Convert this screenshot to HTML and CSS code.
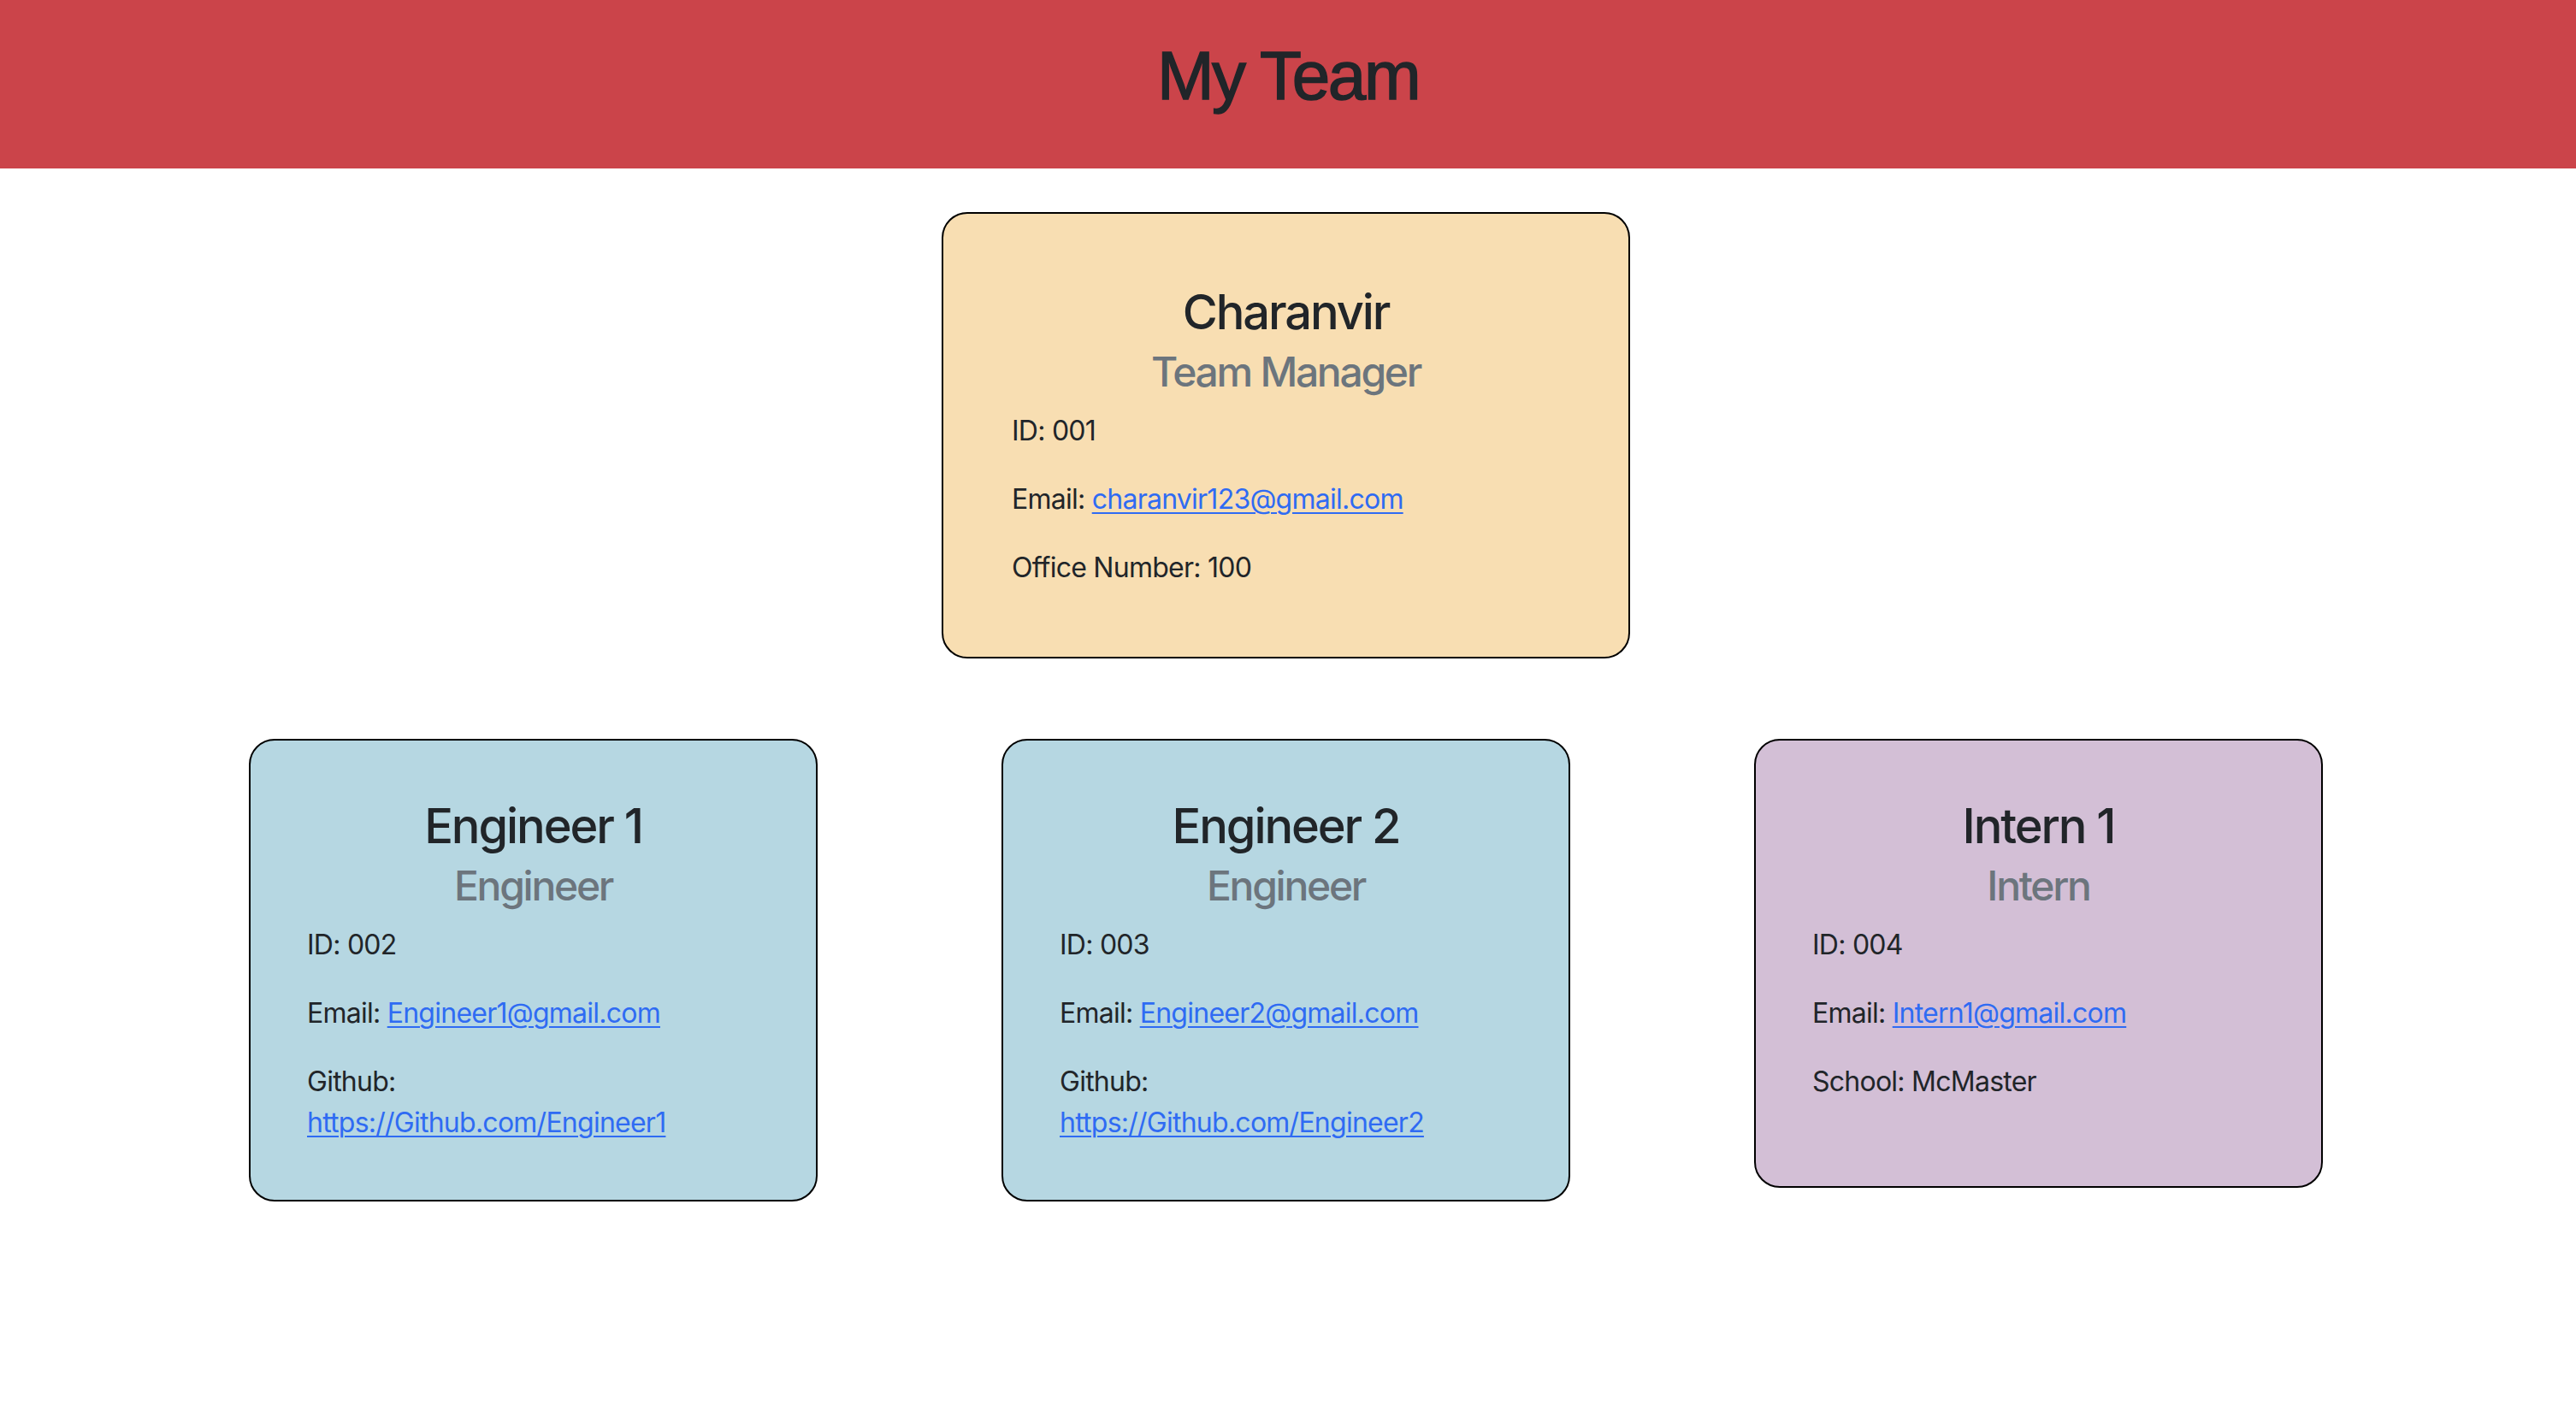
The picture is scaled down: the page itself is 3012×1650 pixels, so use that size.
FILE: index.html
```html
<!DOCTYPE html>
<html lang="en">
<head>
<meta charset="utf-8">
<title>My Team</title>
<link rel="stylesheet" href="styles.css">
</head>
<body>
<header class="banner">
  <h1 class="banner-title">My Team</h1>
</header>
<main class="team">
  <div class="row row-top">
    <section class="card card-manager">
      <h3 class="card-name">Charanvir</h3>
      <h4 class="card-role">Team Manager</h4>
      <p class="card-line">ID: 001</p>
      <p class="card-line">Email: <a href="#">charanvir123@gmail.com</a></p>
      <p class="card-line">Office Number: 100</p>
    </section>
  </div>
  <div class="row row-bottom">
    <section class="card card-engineer">
      <h3 class="card-name">Engineer 1</h3>
      <h4 class="card-role">Engineer</h4>
      <p class="card-line">ID: 002</p>
      <p class="card-line">Email: <a href="#">Engineer1@gmail.com</a></p>
      <p class="card-line">Github:<br><a href="#">https://Github.com/Engineer1</a></p>
    </section>
    <section class="card card-engineer">
      <h3 class="card-name">Engineer 2</h3>
      <h4 class="card-role">Engineer</h4>
      <p class="card-line">ID: 003</p>
      <p class="card-line">Email: <a href="#">Engineer2@gmail.com</a></p>
      <p class="card-line">Github:<br><a href="#">https://Github.com/Engineer2</a></p>
    </section>
    <section class="card card-intern">
      <h3 class="card-name">Intern 1</h3>
      <h4 class="card-role">Intern</h4>
      <p class="card-line">ID: 004</p>
      <p class="card-line">Email: <a href="#">Intern1@gmail.com</a></p>
      <p class="card-line card-line-spaced">School: McMaster</p>
    </section>
  </div>
</main>
</body>
</html>
```

FILE: styles.css
```css
* { box-sizing: border-box; }

html, body {
  margin: 0;
  padding: 0;
  background: #ffffff;
  color: #212529;
  font-family: Inter, "Noto Sans", sans-serif;
}

.banner {
  background: #cb444a;
  height: 197px;
  padding-top: 41px;
  text-align: center;
}

.banner-title {
  margin: 0;
  font-family: "Liberation Sans", Arial, sans-serif;
  font-weight: 400;
  font-size: 80px;
  line-height: 96px;
  letter-spacing: -2.4px;
  color: #212529;
  -webkit-text-stroke: 1.5px #212529;
}

.team {
  display: flex;
  flex-direction: column;
  align-items: center;
  padding-top: 51px;
  padding-right: 5px;
}

.row {
  display: flex;
  justify-content: center;
  align-items: flex-start;
}

.row-bottom {
  margin-top: 94px;
  gap: 215px;
}

.card {
  border: 2px solid #000000;
  border-radius: 30px;
  text-align: left;
}

.card-manager {
  width: 805px;
  background: #f8deb2;
  padding: 82px 80px 80px;
}

.card-engineer,
.card-intern {
  width: 665px;
  padding: 67px 66px 66px;
}

.card-engineer { background: #b6d7e2; }
.card-intern { background: #d3bfd6; }

.card-name {
  margin: 0 0 7px;
  text-align: center;
  font-size: 56px;
  line-height: 67px;
  font-weight: 500;
  letter-spacing: -2.1px;
  color: #212529;
}

.card-role {
  margin: 0 0 16px;
  text-align: center;
  font-size: 48px;
  line-height: 58px;
  font-weight: 500;
  letter-spacing: -2.3px;
  color: #6c757d;
}

.card-line {
  margin: 0 0 32px;
  font-size: 32px;
  line-height: 48px;
  font-weight: 400;
  letter-spacing: -0.75px;
  color: #212529;
}

.card-line:last-child { margin-bottom: 0; }
.card-line.card-line-spaced { margin-bottom: 32px; }

.card-line a {
  color: #2f6bf3;
  text-decoration: underline;
  text-decoration-thickness: 2px;
  text-underline-offset: 4px;
}
```
